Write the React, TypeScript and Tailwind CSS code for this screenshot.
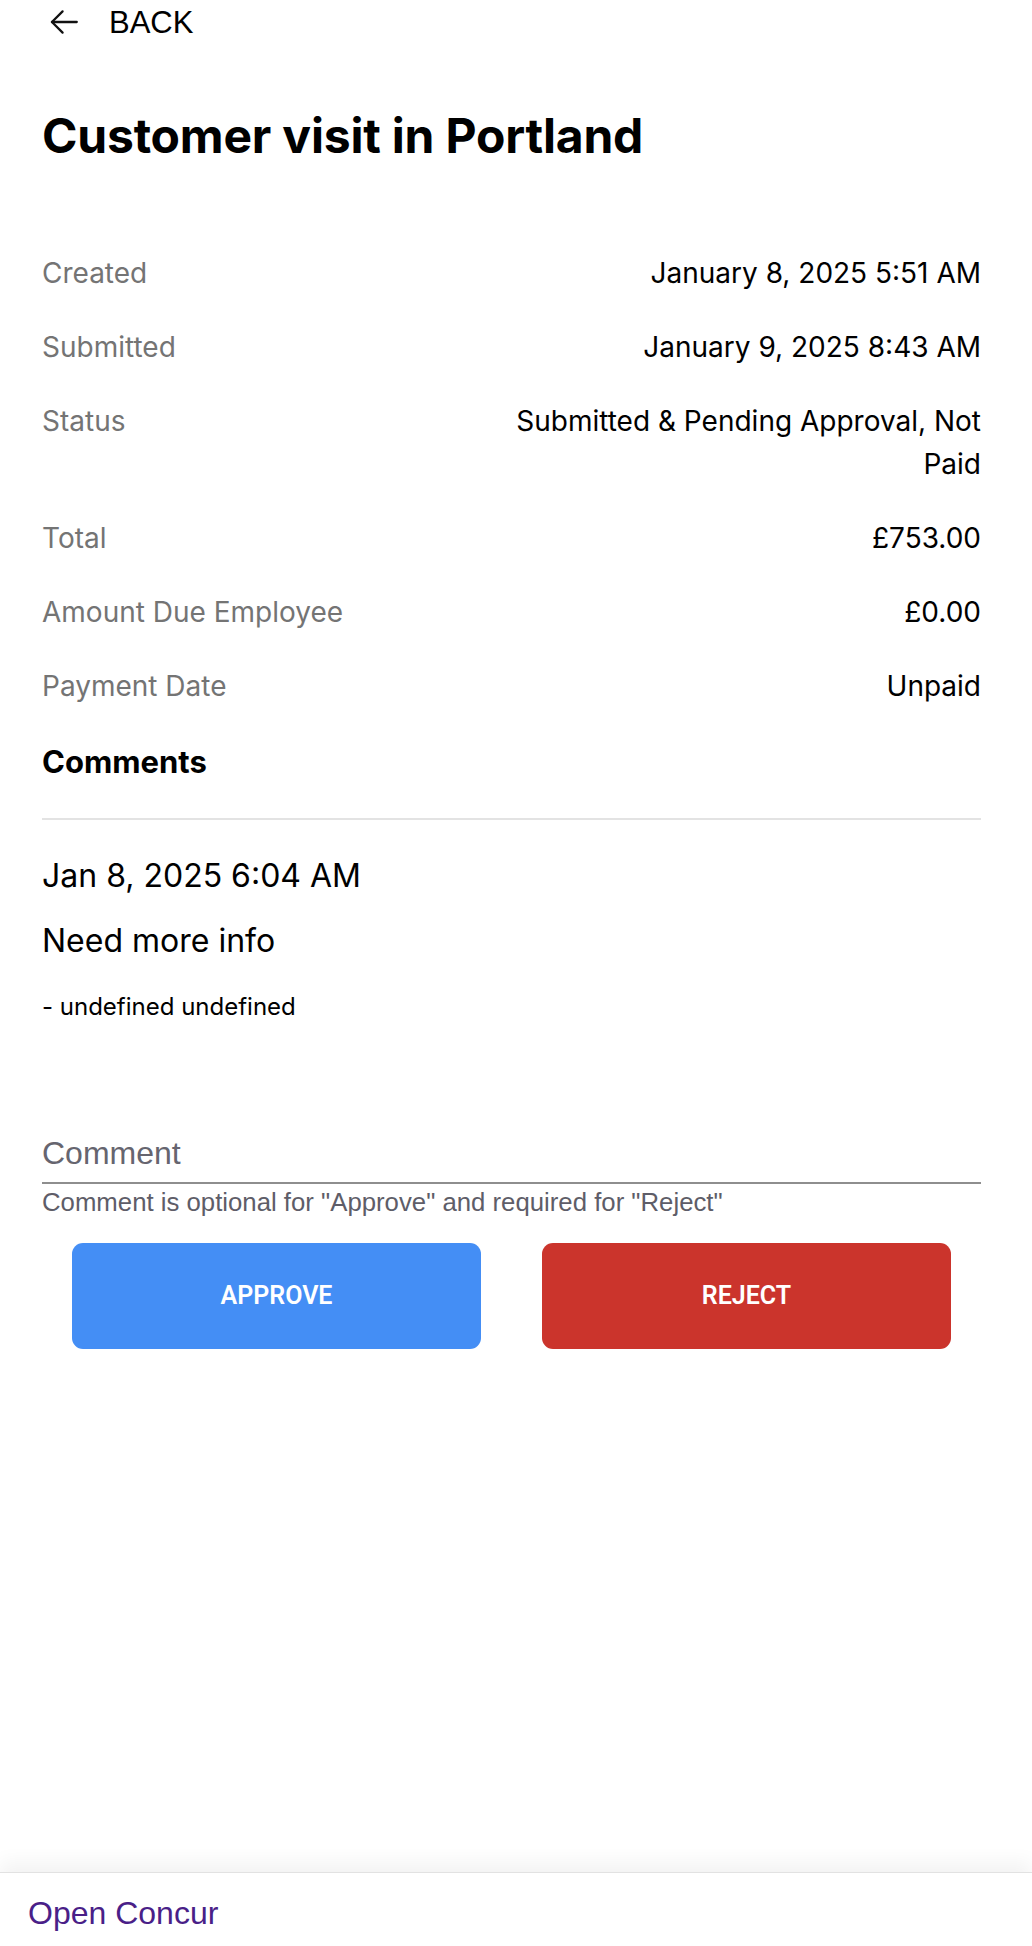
import React from "react";

const rows: { label: string; value: React.ReactNode }[] = [
  { label: "Created", value: "January 8, 2025 5:51 AM" },
  { label: "Submitted", value: "January 9, 2025 8:43 AM" },
  {
    label: "Status",
    value: (
      <>
        Submitted &amp; Pending Approval, Not
        <br />
        Paid
      </>
    ),
  },
  { label: "Total", value: "£753.00" },
  { label: "Amount Due Employee", value: "£0.00" },
  { label: "Payment Date", value: "Unpaid" },
];

export default function App() {
  return (
    <div className="min-h-[1946px] w-[1032px] bg-white flex flex-col font-['Inter',sans-serif] text-black">
      <main className="flex-1 pl-[42px] pr-[51px]">
        {/* Header */}
        <div className="h-[44px] flex items-center">
          <svg
            width="34"
            height="34"
            viewBox="0 0 24 24"
            fill="none"
            stroke="#111"
            strokeWidth="1.6"
            strokeLinecap="round"
            strokeLinejoin="round"
            className="ml-[5px]"
          >
            <path d="M21 12H3.5" />
            <path d="M11 4.5L3.5 12L11 19.5" />
          </svg>
          <span className="ml-[28px] text-[31px] leading-none font-['Liberation_Sans',Arial,sans-serif]">
            BACK
          </span>
        </div>

        {/* Title */}
        <h1 className="mt-[64px] text-[48px] leading-[56px] font-bold tracking-[-0.2px]">
          Customer visit in Portland
        </h1>

        {/* Details */}
        <div className="mt-[88px] flex flex-col gap-[31px] text-[28px] leading-[43px]">
          {rows.map((r) => (
            <div key={r.label} className="flex justify-between items-start">
              <div className="text-[#747474]">{r.label}</div>
              <div className="text-right text-black">{r.value}</div>
            </div>
          ))}
        </div>

        {/* Comments */}
        <h2 className="mt-[36px] text-[31px] leading-[36px] font-bold">Comments</h2>
        <div className="mt-[38px] h-[2px] bg-[#e3e3e3]" />

        <div className="mt-[36px] text-[32px] leading-[40px]">Jan 8, 2025 6:04 AM</div>
        <div className="mt-[25px] text-[32px] leading-[40px]">Need more info</div>
        <div className="mt-[31px] text-[24px] leading-[30px]">- undefined undefined</div>

        {/* Comment input */}
        <div className="mt-[111px] font-['Liberation_Sans',Arial,sans-serif]">
          <div className="pb-[9px] border-b-2 border-[#8e8e8e]">
            <input
              placeholder="Comment"
              className="w-full h-[40px] text-[32px] leading-[40px] outline-none placeholder:text-[#66656f] text-black bg-transparent"
            />
          </div>
          <div className="mt-[3px] text-[25.75px] leading-[30px] text-[#5e5d68]">
            Comment is optional for "Approve" and required for "Reject"
          </div>
        </div>

        {/* Buttons */}
        <div className="mt-[26px] px-[30px] flex gap-[61px]">
          <button className="flex-1 h-[106px] rounded-[11px] bg-[#448ef5] text-white text-[25px] font-semibold font-['Roboto',sans-serif]">
            APPROVE
          </button>
          <button className="flex-1 h-[106px] rounded-[11px] bg-[#cb342c] text-white text-[25px] font-semibold font-['Roboto',sans-serif]">
            REJECT
          </button>
        </div>
      </main>

      {/* Footer */}
      <footer className="h-[74px] border-t border-[#e2e2e2] shadow-[0_-10px_18px_rgba(0,0,0,0.05)] bg-white pl-[28px] pt-[21px]">
        <a className="text-[32px] leading-[38px] text-[#4a1f88] font-['Liberation_Sans',Arial,sans-serif]">
          Open Concur
        </a>
      </footer>
    </div>
  );
}
